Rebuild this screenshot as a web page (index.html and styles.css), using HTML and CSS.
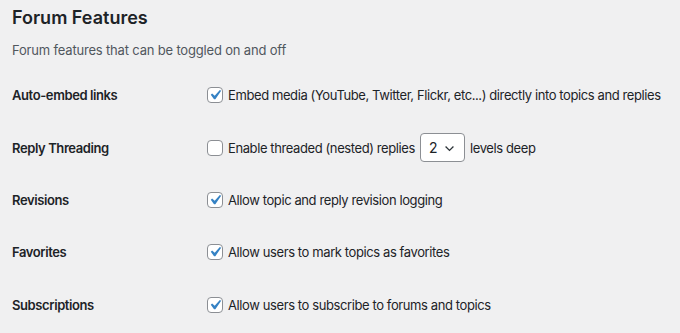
FILE: index.html
```html
<!DOCTYPE html>
<html>
<head>
<meta charset="utf-8">
<link rel="stylesheet" href="styles.css">
</head>
<body>
<div class="wrap">
  <h2 class="title">Forum Features</h2>
  <p class="desc">Forum features that can be toggled on and off</p>
  <div class="table">
    <div class="row">
      <div class="label">Auto-embed links</div>
      <div class="field">
        <span class="cb checked"><svg viewBox="0 0 20 20"><path d="M14.83 4.89l1.34.94-5.81 8.38H9.02L5.78 9.67l1.34-1.25 2.57 2.4z"/></svg></span>
        <span class="text">Embed media (YouTube, Twitter, Flickr, etc...) directly into topics and replies</span>
      </div>
    </div>
    <div class="row">
      <div class="label">Reply Threading</div>
      <div class="field">
        <span class="cb"></span>
        <span class="text">Enable threaded (nested) replies</span>
        <span class="select">2<svg class="chev" viewBox="0 0 12 8"><path d="M1.5 1.8L6 6.2l4.5-4.4"/></svg></span>
        <span class="text">levels deep</span>
      </div>
    </div>
    <div class="row">
      <div class="label">Revisions</div>
      <div class="field">
        <span class="cb checked"><svg viewBox="0 0 20 20"><path d="M14.83 4.89l1.34.94-5.81 8.38H9.02L5.78 9.67l1.34-1.25 2.57 2.4z"/></svg></span>
        <span class="text">Allow topic and reply revision logging</span>
      </div>
    </div>
    <div class="row">
      <div class="label">Favorites</div>
      <div class="field">
        <span class="cb checked"><svg viewBox="0 0 20 20"><path d="M14.83 4.89l1.34.94-5.81 8.38H9.02L5.78 9.67l1.34-1.25 2.57 2.4z"/></svg></span>
        <span class="text">Allow users to mark topics as favorites</span>
      </div>
    </div>
    <div class="row">
      <div class="label">Subscriptions</div>
      <div class="field">
        <span class="cb checked"><svg viewBox="0 0 20 20"><path d="M14.83 4.89l1.34.94-5.81 8.38H9.02L5.78 9.67l1.34-1.25 2.57 2.4z"/></svg></span>
        <span class="text">Allow users to subscribe to forums and topics</span>
      </div>
    </div>
  </div>
</div>
</body>
</html>
```

FILE: styles.css
```css
html, body {
  margin: 0;
  padding: 0;
  background: #f0f0f1;
}
body {
  font-family: Inter, "Noto Sans", sans-serif;
  font-size: 13px;
  color: #1d2327;
  overflow: hidden;
  letter-spacing: -0.4px;
}
.wrap {
  padding: 0 12px;
}
.title {
  margin: 0;
  padding-top: 8px;
  font-size: 18px;
  line-height: 20px;
  font-weight: 600;
  letter-spacing: 0;
  color: #1d2327;
}
.desc {
  margin: 13px 0 0;
  line-height: 18px;
  color: #50575e;
  letter-spacing: -0.18px;
}
.table {
  margin-top: 10px;
}
.row {
  display: flex;
  align-items: center;
  height: 52.4px;
}
.label {
  width: 195px;
  flex: none;
  font-weight: 600;
}
.field {
  display: flex;
  align-items: center;
  white-space: nowrap;
}
.cb {
  width: 16px;
  height: 16px;
  box-sizing: border-box;
  border: 1px solid #8c8f94;
  border-radius: 4px;
  background: #fff;
  margin-right: 5px;
  position: relative;
  flex: none;
}
.cb svg {
  position: absolute;
  left: -3px;
  top: -3px;
  width: 20px;
  height: 20px;
  fill: #3582c4;
}
.select {
  display: inline-flex;
  align-items: center;
  box-sizing: border-box;
  height: 29px;
  width: 45px;
  margin: 0 5px;
  padding-left: 8px;
  border: 1px solid #8c8f94;
  border-radius: 4px;
  background: #fff;
  font-size: 14px;
  position: relative;
}
.chev {
  position: absolute;
  right: 9px;
  top: 11px;
  width: 11px;
  height: 7px;
  fill: none;
  stroke: #2c3338;
  stroke-width: 1.5;
}
```
